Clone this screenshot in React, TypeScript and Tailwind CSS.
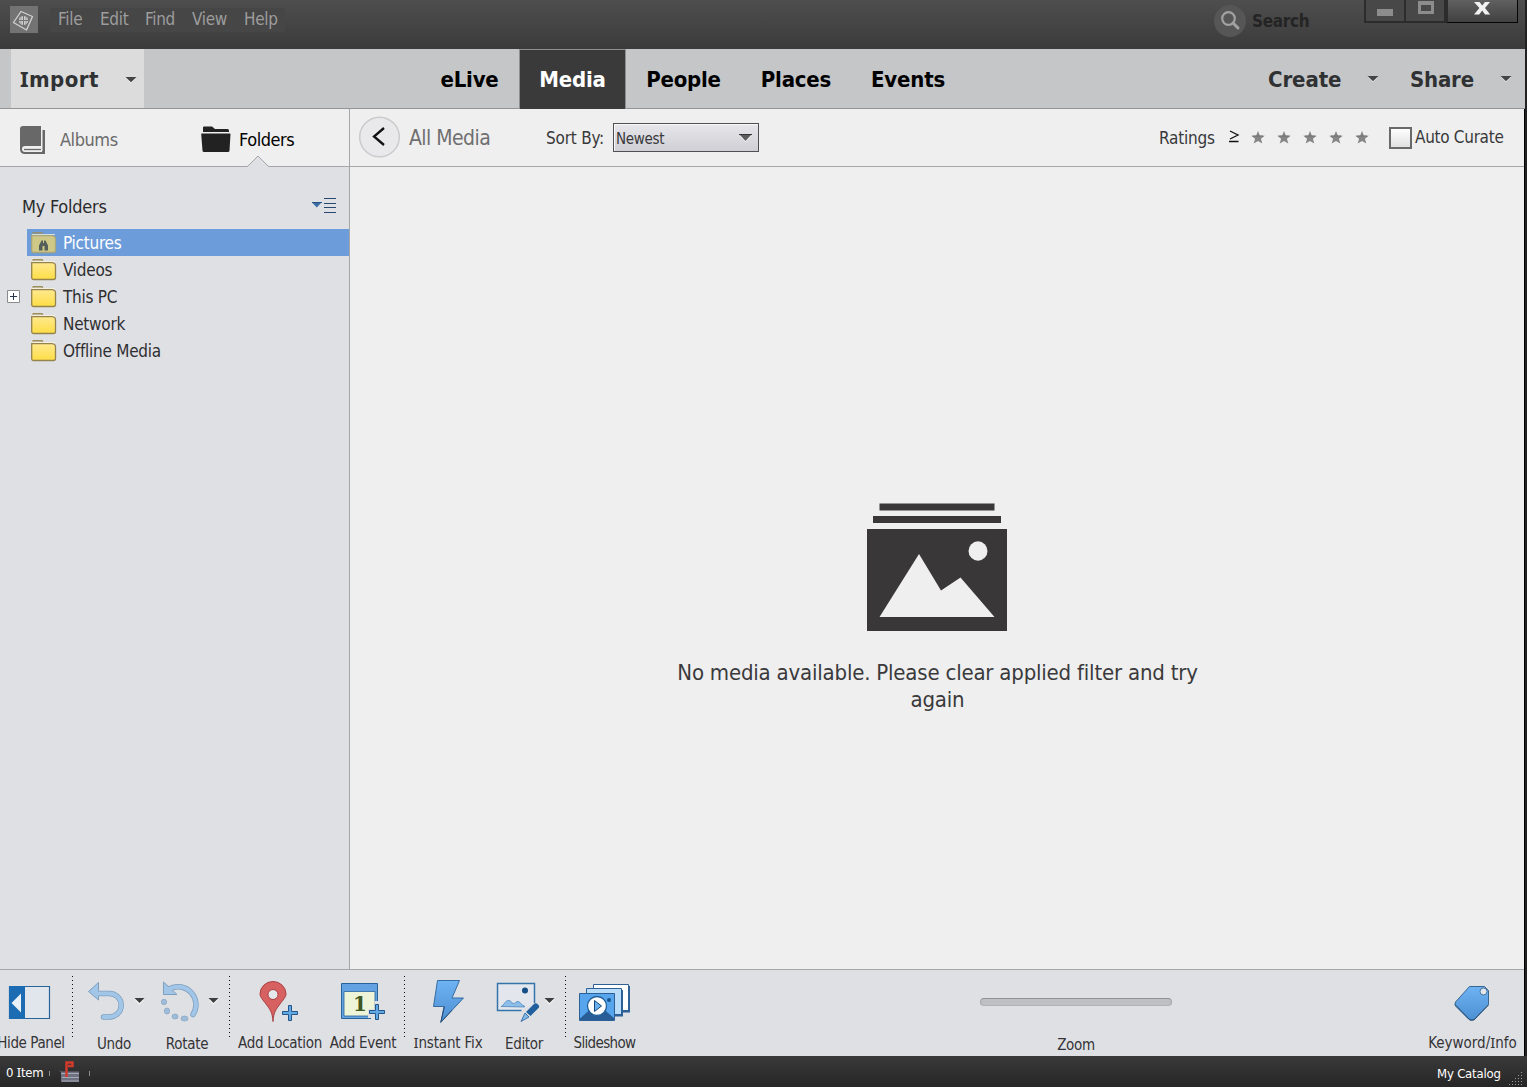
import React, { useState } from 'react';

const MENUS = [
  { label: 'File', width: 'w-[42px]' },
  { label: 'Edit', width: 'w-[45px]' },
  { label: 'Find', width: 'w-[47px]' },
  { label: 'View', width: 'w-[52px]' },
  { label: 'Help', width: 'w-[42px]' },
];

const TABS = [
  { label: 'eLive', width: 'w-[99px]' },
  { label: 'Media', width: 'w-[107px]' },
  { label: 'People', width: 'w-[115px]' },
  { label: 'Places', width: 'w-[110px]' },
  { label: 'Events', width: 'w-[114px]' },
];

const FOLDERS = ['Pictures', 'Videos', 'This PC', 'Network', 'Offline Media'];

const SerifI = () => <span className="font-['Noto_Sans'] leading-none">I</span>;

const Caret = ({ className = '' }: { className?: string }) => (
  <svg width="12" height="7" viewBox="0 0 12 7" className={className}>
    <path d="M1 2h10L6 7z" fill="#f5f5f5" />
    <path d="M.5 1h11L6 6.300z" fill="#444446" />
  </svg>
);

const TitleBar = () => (
  <header className="flex h-[49px] bg-linear-to-b from-[#4e4e4e] to-[#3b3b3b]">
    <svg width="28" height="27" viewBox="0 0 28 27" className="ml-[10px] mt-[6px]">
      <rect width="28" height="27" fill="#737373" />
      <path d="M11 5.500L22.500 10.500 16.500 24 3.500 16.500z" fill="none" stroke="#d2d2d2" strokeWidth="1.300" strokeLinejoin="round" />
      <circle cx="13.500" cy="14.500" r="4.600" fill="#d2d2d2" />
      <path d="M13.500 9v11M8 14.500h11" stroke="#737373" strokeWidth="1.100" />
      <path d="M11 10.500v8M16 10.500v8" stroke="#737373" strokeWidth=".6" />
    </svg>
    <nav className="ml-3 mt-2 flex h-6 w-[235px] bg-[#464646] pl-2 text-[17px] leading-[23px] tracking-[-0.3px] text-[#9d9d9d]">
      {MENUS.map(m => (
        <span key={m.label} className={`${m.width} shrink-0`}>{m.label}</span>
      ))}
    </nav>
    <div className="ml-auto mt-[5px] flex h-8 w-[150px] items-center">
      <svg width="32" height="32" viewBox="0 0 32 32">
        <circle cx="16" cy="16" r="16" fill="#565656" />
        <circle cx="14.500" cy="13.500" r="6.300" fill="none" stroke="#a2a2a2" strokeWidth="2.200" />
        <path d="M19 18l5 5" stroke="#a2a2a2" strokeWidth="3" strokeLinecap="round" />
      </svg>
      <span className="ml-[6px] pt-px text-[17px] font-bold tracking-[-0.3px] text-[#242424]">Search</span>
    </div>
    <div className="mr-[7px] flex h-[23px]">
      <div className="flex w-[42px] justify-center border-x-2 border-b-2 border-[#2c2c2c] bg-[#484848]">
        <div className="mr-px mt-[9px] h-[7px] w-4 bg-[#8c8c8c]" />
      </div>
      <div className="flex w-10 justify-center border-b-2 border-r-2 border-[#2c2c2c] bg-[#484848]">
        <div className="ml-0.5 mt-px h-[13px] w-4 border-[3px] border-t-4 border-[#8c8c8c]" />
      </div>
      <div className="flex w-[72px] justify-center border-b border-l-2 border-r border-[#050505] border-l-[#2c2c2c] bg-linear-to-b from-[#606060] to-[#414141]">
        <svg width="18" height="14" viewBox="0 0 18 14" className="mr-0.5 mt-px">
          <path d="M1 1h5.500l2.700 3.500L12 1h5l-5 6 5.200 6.500H12L9.200 9.500 6.200 13.500H1L6.400 7z" fill="#f1f1f1" />
        </svg>
      </div>
    </div>
  </header>
);

const ModeBar = ({ tab, onTab }: { tab: string; onTab: (tab: string) => void }) => (
  <div className="flex h-[60px] border-b border-[#949597] bg-[#c5c6c8] text-[22px] font-bold text-[#2f3133]">
    <button className="ml-[11px] flex w-[133px] items-center bg-[#dcdcdc] pl-[9px]">
      <span className="w-[105px] pt-px text-left tracking-[0.45px]"><SerifI />mport</span>
      <Caret className="mt-px" />
    </button>
    <div className="ml-[276px] flex text-black">
      {TABS.map(t => (
        <button
          key={t.label}
          onClick={() => onTab(t.label)}
          className={`${t.width} h-[60px] tracking-[-0.2px] ${
            t.label === tab ? 'border border-b-0 border-[#8e8f91] bg-[#3a3a3a] text-white' : 'pt-px'
          }`}
        >
          {t.label}
        </button>
      ))}
    </div>
    <button className="ml-auto flex w-[141px] items-center">
      <span className="w-[99px] pt-px text-left tracking-[-0.1px]">Create</span>
      <Caret />
    </button>
    <button className="mr-[9px] flex w-[107px] items-center pl-px">
      <span className="w-[90px] pt-px text-left tracking-[-0.2px]">Share</span>
      <Caret />
    </button>
  </div>
);

const PanelTabs = () => (
  <div className="relative flex h-[58px] border-b border-[#a5a6a8] bg-[#efefef] text-[18px] tracking-[-0.45px]">
    <button className="flex w-[201px] items-center pl-5 pt-1 text-[#6b6b6b]">
      <svg width="26" height="28" viewBox="0 0 26 28">
        <path d="M3 0h18v20H5q-3 0-3 3t3 3h17V4h3v24H5q-5 0-5-5V3q0-3 3-3z" fill="#686868" />
        <path d="M4 23.500h17" stroke="#686868" strokeWidth="1.300" />
        <path d="M22 4v21" stroke="#efefef" />
      </svg>
      <span className="ml-[14px]">Albums</span>
    </button>
    <button className="flex items-center pt-1 text-black">
      <svg width="30" height="27" viewBox="0 0 30 27">
        <path d="M2 6V1.500q0-1 1-1h8l3 2.500h12.500q1.500 0 1.500 1.500V6z" fill="#222" />
        <path d="M.5 7.500h28.500q.5 0 .5.500L28.500 24.500q0 1.500-1.500 1.500H3Q1.500 26 1.500 24.500L.2 8z" fill="#222" />
      </svg>
      <span className="ml-2">Folders</span>
    </button>
    <svg width="22" height="12" viewBox="0 0 22 12" className="absolute -bottom-px left-[247px]">
      <path d="M0 11.500L1 11 11 1l10 10 1 .5V12H0z" fill="#dfe0e4" />
      <path d="M0 11.500L1 11 11 1l10 10 1 .5" fill="none" stroke="#a5a6a8" />
    </svg>
  </div>
);

const FolderIcon = ({ watched }: { watched?: boolean }) => (
  <svg width="26" height="22" viewBox="0 0 26 22" opacity={watched ? 0.8 : 1}>
    <defs>
      <linearGradient id="folder" x1="0" y1="0" x2="0" y2="1">
        <stop offset="0" stopColor="#ffe98e" />
        <stop offset="1" stopColor="#fddd45" />
      </linearGradient>
    </defs>
    <path d="M1.500 1.500l1-.8h8l1.500.8" fill="none" stroke="#9d8d56" strokeWidth="1.500" />
    <path d="M1 2.500h23" stroke="#f4efdc" />
    <path d="M.7 3.700H21q3.500.3 3.500 3.300v11.500q0 2-2 2H2.700q-2 0-2-2z" fill={watched ? '#e8d574' : 'url(#folder)'} stroke={watched ? '#b9a865' : '#95834d'} strokeWidth="1.300" />
    {watched && (
      <path d="M8 18.500v-5l2.500-5H12V11h1V8.500h1.500l2.500 5v5h-3.500V14h-2v4.500z" fill="#4e5138" />
    )}
  </svg>
);

const FolderPanel = () => {
  const [selected, setSelected] = useState('Pictures');

  return (
    <aside className="flex w-[350px] flex-col border-r border-[#a5a6a8] bg-[#dfe0e4]">
      <PanelTabs />
      <div className="mt-[25px] flex h-[27px] items-center pl-[22px] pr-3 text-[18px] tracking-[-0.25px] text-[#2b2b2d]">
        <span className="pt-px">My Folders</span>
        <svg width="26" height="17" viewBox="0 0 26 17" className="ml-auto">
          <path d="M1 5.500h9.500l-4.700 5z" fill="#3a6da5" />
          <path d="M1 5.500h10" stroke="#244f80" />
          <path d="M13 1.500h12M13 6.500h12M13 10.500h12M13 15.500h12" stroke="#29486f" />
        </svg>
      </div>
      <ul className="mt-[10px]">
        {FOLDERS.map(name => (
          <li key={name} className="flex h-[27px]" onClick={() => setSelected(name)}>
            <div className="flex w-[27px] items-center pl-[7px]">
              {name === 'This PC' && (
                <svg width="13" height="13" viewBox="0 0 13 13">
                  <path d="M.5.5h12v12H.5z" fill="#fff" stroke="#8c8c8c" />
                  <path d="M3 6.500h7M6.500 3v7" stroke="#26364e" />
                </svg>
              )}
            </div>
            <div
              className={`flex grow items-center pl-1 text-[17px] leading-[27px] tracking-[-0.25px] ${
                name === selected ? 'bg-[#6c9cda] text-white' : 'text-[#2f2f31]'
              }`}
            >
              <FolderIcon watched={name === 'Pictures'} />
              <span className="ml-[6px] pt-px">{name}</span>
            </div>
          </li>
        ))}
      </ul>
    </aside>
  );
};

const Star = () => (
  <svg width="14" height="13" viewBox="0 0 14 13">
    <path d="M7 0l1.800 4.500 5 .3-3.900 3 1.400 4.800L7 10l-4.300 2.600 1.400-4.800-3.900-3 5-.3z" fill="#858585" />
    <path d="M2 5h10" stroke="#6c6c6c" strokeWidth=".8" />
  </svg>
);

const FilterBar = () => (
  <div className="flex h-[58px] items-center border-b border-[#a5a6a8] text-[17px] text-[#39393b]">
    <svg width="42" height="42" viewBox="0 0 42 42" className="mb-0.5 ml-[9px]">
      <circle cx="20.500" cy="21" r="19.800" fill="#e9e9eb" stroke="#cbcbcd" strokeWidth="1.500" />
      <path d="M25 12l-10 8.500L25 29" fill="none" stroke="#111" strokeWidth="2.300" />
    </svg>
    <span className="ml-[8px] w-[137px] pt-0.5 text-[21px] tracking-[-0.55px] text-[#6f6f71]">All Media</span>
    <span className="w-[67px] pt-[3px] tracking-[-0.2px]">Sort By:</span>
    <div className="flex h-[29px] w-[146px] items-center border border-[#4f4f52] bg-linear-to-b from-[#e6e6eb] to-[#cfcfd5] pl-[2px] pr-[6px] text-[15px] tracking-[-0.3px] shadow-[inset_1px_1px_0_#f8f8f8]">
      <span className="pt-[3px]">Newest</span>
      <svg width="13" height="8" viewBox="0 0 13 8" className="ml-auto">
        <path d="M.5 1.500h12L6.500 8z" fill="#fafafa" />
        <path d="M.5 0.500h12L6.500 7z" fill="#5c5c5f" />
        <path d="M0 .5h13" stroke="#343436" />
      </svg>
    </div>
    <span className="ml-auto w-[70px] pt-[3px] tracking-[-0.2px]">Ratings</span>
    <svg width="11" height="14" viewBox="0 0 11 14" className="mb-0.5 mr-[11px]">
      <path d="M1 1l8 4-8 4M0 11.500h9.500" fill="none" stroke="#111" strokeWidth="1.300" />
    </svg>
    <div className="flex w-[138px] gap-3">
      {[1, 2, 3, 4, 5].map(n => <Star key={n} />)}
    </div>
    <div className="mt-px h-[22px] w-[23px] border-2 border-[#69696b] bg-linear-to-b from-white to-[#e0e0e0]" />
    <span className="ml-[3px] w-[109px] pt-px tracking-[-0.3px]">Auto Curate</span>
  </div>
);

const EmptyMedia = () => (
  <div className="flex grow flex-col items-center pt-[336px] text-[#3a3a3c]">
    <svg width="140" height="128" viewBox="0 0 140 128">
      <path d="M12.500 0.500h115v7h-115zM6 13h128v7H6zM0 26h140v102H0z" fill="#3a3738" />
      <path d="M12.500 114L52 51l22 36.500L93.500 74.500l34 39.500z" fill="#efefef" />
      <ellipse cx="111" cy="48" rx="9.500" ry="9.700" fill="#efefef" />
    </svg>
    <p className="mt-[28px] w-[560px] pl-px text-center text-[22px] leading-[27px] tracking-[-0.2px]">
      No media available. Please clear applied filter and try
      <br />
      again
    </p>
  </div>
);

type ToolProps = {
  label: React.ReactNode;
  width: string;
  icon: React.ReactNode;
  viewBox: string;
  low?: boolean;
};

const Tool = ({ label, width, icon, viewBox, low }: ToolProps) => (
  <button className={`flex shrink-0 flex-col items-center ${width}`}>
    <svg viewBox={viewBox} className="h-[63px] w-full shrink-0">{icon}</svg>
    <span className={`text-[15px] leading-5 tracking-[-0.3px] whitespace-nowrap ${low ? 'pt-px' : ''}`}>{label}</span>
  </button>
);

const Divider = ({ className = '' }: { className?: string }) => (
  <div className={`mt-[6px] h-[62px] w-px shrink-0 bg-[repeating-linear-gradient(to_bottom,#111_0_1px,transparent_1px_4px)] ${className}`} />
);

const DropArrow = ({ x }: { x: number }) => (
  <g>
    <path d={`M${x} 29.500h10l-5 5z`} fill="#f8f8f8" />
    <path d={`M${x} 28h10l-5 5z`} fill="#3e3e40" />
  </g>
);

const Plus = ({ x, y }: { x: number; y: number }) => (
  <path
    transform={`translate(${x} ${y})`}
    d="M6.500.5h3v6h6v3h-6v6h-3v-6h-6v-3h6z"
    fill="#61a9e6"
    stroke="#245687"
  />
);

const HidePanelIcon = (
  <g>
    <path d="M9.500 16.500h40v32h-40z" fill="#e1e6ed" stroke="#28639a" strokeWidth="1.200" />
    <path d="M9 16h16v33H9z" fill="#1c6cb3" />
    <path d="M21 23.500v19l-9.500-9.500z" fill="#eaf1f7" />
  </g>
);

const UndoIcon = (
  <g>
    <path d="M24 23.500h12.500a11.700 11.700 0 0 1 0 23.400H30.500" fill="none" stroke="#7f9fbe" strokeWidth="5.500" strokeLinecap="round" />
    <path d="M15.500 21.500L25.500 12.500v17.500z" fill="#a1c6e8" stroke="#7f9fbe" />
    <path d="M24 23.500h12.500a11.700 11.700 0 0 1 0 23.400H30.500" fill="none" stroke="#a1c6e8" strokeWidth="4" strokeLinecap="round" />
    <DropArrow x={61.500} />
  </g>
);

const RotateIcon = (
  <g>
    <path d="M15 18.500A18 18 0 0 1 38 44.500" fill="none" stroke="#7f9fbe" strokeWidth="5.500" strokeLinecap="round" />
    <path d="M8.500 12v12.500H22z" fill="#a1c6e8" stroke="#7f9fbe" />
    <path d="M15 18.500A18 18 0 0 1 38 44.500" fill="none" stroke="#a1c6e8" strokeWidth="4" strokeLinecap="round" />
    <g fill="#9ebddb" stroke="#87a3bf" strokeWidth=".7">
      <circle cx="9" cy="32" r="2.700" />
      <ellipse cx="12" cy="41" rx="2.700" ry="3" />
      <ellipse cx="20" cy="46.500" rx="3" ry="2.500" />
      <ellipse cx="29.500" cy="48.500" rx="3.500" ry="2.500" />
    </g>
    <DropArrow x={53.500} />
  </g>
);

const LocationIcon = (
  <g>
    <path d="M43 51.500c-.5-9-3-12-7-17.500-3-4-6-7-6-10a13 12.500 0 0 1 26 0c0 3-3 6-6 10-4 5.500-6.500 8.500-7 17.500z" fill="#d76161" stroke="#a84043" />
    <circle cx="43" cy="24.500" r="5" fill="#e5e7ea" stroke="#a84043" />
    <Plus x={52} y={35} />
  </g>
);

const EventIcon = (
  <g>
    <path d="M13.500 13.500h36v35h-36z" fill="#62a2e2" stroke="#28639a" />
    <path d="M16 21.500h31V46H16z" fill="#edf4d8" stroke="#28639a" strokeWidth=".8" />
    <text x="32" y="41" textAnchor="middle" fill="#3f5722" className="font-['DejaVu_Serif'] text-[20px] font-bold">1</text>
    <path d="M46.500 31H52v7h5v10h-5v6h-9v-6h-3v-9h6.500z" fill="#dfe0e4" />
    <Plus x={41} y={34} />
  </g>
);

const FixIcon = (
  <g>
    <path d="M32.500 10.500h22l-7.500 17.500h11.500L36 52l3-15.500h-10.500z" fill="url(#blue)" stroke="#356ba1" />
    <path d="M39.500 36.500L35.700 52.500 47 40" fill="none" stroke="#27507b" />
  </g>
);

const EditorIcon = (
  <g>
    <path d="M43.500 33V13.500h-37v27h24" fill="#e3e7ed" stroke="#3473ab" strokeWidth="1.500" />
    <circle cx="34" cy="20.500" r="3" fill="#134d85" />
    <path d="M10 36.500c3-1 4-6 7.500-6s3 3 5 3 2-2 4.500-2 3 4 6.500 4.500v1z" fill="#8dbde9" stroke="#4b86bc" strokeWidth=".8" />
    <path d="M35 42l8.500-8.500q1.500-1 3.500 1t.5 3.500L39.500 46z" fill="#205f9d" />
    <path d="M34 43l4 4-8 4.500z" fill="#84b7e4" stroke="#205f9d" strokeWidth=".8" />
    <DropArrow x={53.500} />
  </g>
);

const SlideshowIcon = (
  <g>
    <path d="M27.500 14.500h35v26h-35z" fill="#fff" stroke="#2c6097" />
    <path d="M63 16v25.500H54" fill="none" stroke="#2c6097" strokeWidth="2" />
    <path d="M20.500 18.500h35v26h-35z" fill="#b9ddf9" stroke="#2c6097" />
    <path d="M56 20v25.500H48" fill="none" stroke="#2c6097" strokeWidth="2" />
    <path d="M13.500 23.500h35v27h-35z" fill="#56a5ed" stroke="#2c6097" />
    <path d="M14 50v-1.500l10-9h14l10.500 9V50z" fill="#285e95" />
    <circle cx="43" cy="30" r="2" fill="#17558e" />
    <circle cx="31" cy="36" r="9.500" fill="#fff" stroke="#236099" strokeWidth="1.300" />
    <path d="M28.500 30.500v11l7-5.500z" fill="#6bb1ee" stroke="#14487a" />
  </g>
);

const TagIcon = (
  <g>
    <path d="M38.500 16.500h15l4 4v14L43 49.500q-3 1.500-5 0L24.500 36q-1-2 0-4z" fill="url(#blue)" stroke="#38668f" />
    <path d="M24 34.500l15 15.500h4L57.500 35" fill="none" stroke="#254c75" />
    <circle cx="52.500" cy="21.500" r="3.500" fill="#e2e8ee" stroke="#4c7196" />
  </g>
);

const ActionBar = () => (
  <div className="flex h-[87px] shrink-0 overflow-hidden border-t border-[#a5a6a8] bg-[#dfe0e4] text-[#343436]">
    <svg className="size-0">
      <linearGradient id="blue" x1="0" y1="0" x2="0" y2="1">
        <stop offset="0" stopColor="#6eb3f4" />
        <stop offset="1" stopColor="#4c8fd2" />
      </linearGradient>
    </svg>
    <Tool label={<span className="-ml-[10px] tracking-[-0.4px]">Hide Panel</span>} width="w-[72px]" viewBox="0 0 72 63" icon={HidePanelIcon} />
    <Divider />
    <Tool label="Undo" width="w-[82px]" viewBox="0 0 82 63" icon={UndoIcon} low />
    <Tool label="Rotate" width="w-[64px]" viewBox="0 0 64 63" icon={RotateIcon} low />
    <Divider className="ml-[10px]" />
    <Tool label={<span className="pl-0.5">Add Location</span>} width="w-[98px]" viewBox="0 0 98 63" icon={LocationIcon} />
    <Tool label="Add Event" width="w-[70px]" viewBox="0 0 70 63" icon={EventIcon} />
    <Divider className="ml-[6px]" />
    <Tool label={<span className="tracking-[-0.15px]"><SerifI />nstant Fix</span>} width="w-[86px]" viewBox="0 0 86 63" icon={FixIcon} />
    <Tool label="Editor" width="w-[66px]" viewBox="0 0 66 63" icon={EditorIcon} low />
    <Divider className="ml-[8px]" />
    <Tool label={<span className="tracking-[-0.65px]">Slideshow</span>} width="w-[77px]" viewBox="0 0 77 63" icon={SlideshowIcon} />
    <div className="ml-auto mr-[248px] flex w-[192px] flex-col items-center pt-7">
      <div className="h-2 w-full rounded-full border border-b-[#b0b1b3] border-t-[#929395] border-x-[#a3a4a6] bg-[#bfc0c3]" />
      <span className="mt-[29px] text-[15px] leading-5 tracking-[-0.3px]">Zoom</span>
    </div>
    <Tool label={<span className="pl-px tracking-[0px]">Keyword/<SerifI />nfo</span>} width="w-[104px]" viewBox="-11 0 104 63" icon={TagIcon} />
  </div>
);

const StatusBar = () => (
  <footer className="flex h-[31px] shrink-0 items-center bg-linear-to-b from-[#3a3a3a] to-[#262626] pl-[6px] text-[13px] tracking-[-0.2px] text-white">
    <span className="w-[43px] pt-[3px]">0 <SerifI />tem</span>
    <div className="mt-1 h-[5px] w-px bg-[#8c8c8c]" />
    <svg width="22" height="23" viewBox="0 0 22 23" className="ml-[9px]">
      <path d="M0 10l3 1.500h17V22H2V12z" fill="#6e7180" />
      <path d="M2 13.500h18M3 17.500h17M3 21h17" stroke="#a5a7b4" />
      <path d="M7.500 17V2.500h6v3.500H9" fill="none" stroke="#d23a2c" strokeWidth="2.500" />
    </svg>
    <div className="ml-[8px] mt-1 h-[5px] w-px bg-[#8c8c8c]" />
    <span className="ml-auto w-[72px] pt-1">My Catalog</span>
    <svg width="14" height="14" viewBox="0 0 14 14" className="mr-[4px] mt-3">
      <path
        d="M12.500 1v1M12.500 4v1M9.500 4v1M12.500 7v1M9.500 7v1M6.500 7v1M12.500 10v1M9.500 10v1M6.500 10v1M3.500 10v1M12.500 13v1M9.500 13v1M6.500 13v1M3.500 13v1M.5 13v1"
        stroke="#9a9a9a"
      />
    </svg>
  </footer>
);

export default function App() {
  const [tab, setTab] = useState('Media');

  return (
    <div className="flex h-[1087px] w-[1527px] flex-col overflow-hidden bg-[#222] font-['DejaVu_Sans_Condensed','DejaVu_Sans',sans-serif]">
      <div className="mr-[2px] flex flex-col">
        <TitleBar />
        <ModeBar tab={tab} onTab={setTab} />
      </div>
      <div className="mr-[2px] flex grow flex-col border-r border-black">
        <div className="flex grow">
          <FolderPanel />
          <main className="flex grow flex-col bg-[#efefef]">
            <FilterBar />
            <EmptyMedia />
          </main>
        </div>
        <ActionBar />
      </div>
      <StatusBar />
    </div>
  );
}
